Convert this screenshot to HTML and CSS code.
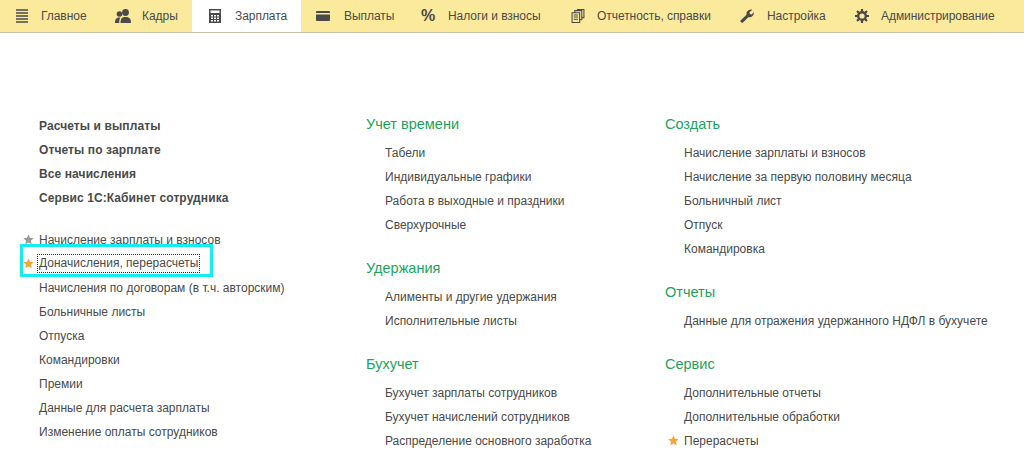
FILE: index.html
```
<!DOCTYPE html>
<html lang="ru">
<head>
<meta charset="utf-8">
<title>Зарплата</title>
<link rel="stylesheet" href="styles.css">
</head>
<body>
<nav class="tabs">
  <a class="tab"><svg class="ico" viewBox="0 0 14 14"><path d="M1 1h12M1 4h12M1 7h12M1 10h12M1 13h12" stroke="#4a4a4a" stroke-width="1.700"/></svg><span>Главное</span></a>
  <a class="tab"><svg class="ico ico-wide" viewBox="0 0 16 14"><circle cx="10.500" cy="3.500" r="3.400" fill="#4a4a4a"/><path d="M5.500 14c0-4.500 1.500-6 5-6s5.500 1.500 5.500 6z" fill="#4a4a4a"/><circle cx="4.500" cy="5" r="2.800" fill="#4a4a4a"/><path d="M0 14c0-4 1.500-5.500 4.500-5.500.5 0 1 .1 1 .1-.8 1-1.300 2.700-1.300 5.400z" fill="#4a4a4a"/></svg><span>Кадры</span></a>
  <a class="tab tab-on"><svg class="ico" viewBox="0 0 12 14" preserveAspectRatio="xMinYMid"><path fill="#4a4a4a" fill-rule="evenodd" d="M0 0h12v14H0zM1.500 1.500v2.500h9V1.500zM2 6v1.500h2V6zM5 6v1.500h2V6zM8 6v1.500h2V6zM2 8.500V10h2V8.500zM5 8.500V10h2V8.500zM8 8.500V10h2V8.500zM2 11v1.500h2V11zM5 11v1.500h2V11zM8 11v1.500h2V11z"/></svg><span>Зарплата</span></a>
  <a class="tab"><svg class="ico ico-far" viewBox="0 0 14 10"><path fill="#4a4a4a" d="M1 0h12a1 1 0 0 1 1 1v1H0V1a1 1 0 0 1 1-1zM0 3.500h14V9a1 1 0 0 1-1 1H1a1 1 0 0 1-1-1z"/></svg><span>Выплаты</span></a>
  <a class="tab"><span class="pct">%</span><span>Налоги и взносы</span></a>
  <a class="tab"><svg class="ico" viewBox="0 0 12 13"><path fill="none" stroke="#4a4a4a" d="M.5 3.500h7v9h-7zM2 5.500h4M2 7.500h4M2 9.500h4M3 3V1.500h6.500V10H8M5.500 1V.5h6V8H10"/></svg><span>Отчетность, справки</span></a>
  <a class="tab"><svg class="ico ico-mid" viewBox="0 0 14 14"><path fill="#4a4a4a" d="M.5 11.500 6.500 5.800C6 3.500 7.500.5 11 .5c.6 0 1 .1 1.300.2L9.500 3.300l.4 1.800 1.800.5 2.100-2.500c.4 3.400-2.400 5.700-5.500 5.200L3 13.500c-1 .8-3.200-.8-2.500-2z"/></svg><span>Настройка</span></a>
  <a class="tab"><svg class="ico" viewBox="0 0 14 14"><circle cx="7" cy="7" r="3.800" fill="none" stroke="#4a4a4a" stroke-width="2.400"/><path stroke="#4a4a4a" stroke-width="2.200" d="M7 0v3M7 11v3M0 7h3M11 7h3M2 2l2 2M10 10l2 2M12 2l-2 2M4 10l-2 2"/></svg><span>Администрирование</span></a>
</nav>
<main class="columns">
  <section class="col col-a">
    <ul class="list strong">
      <li>Расчеты и выплаты</li>
      <li>Отчеты по зарплате</li>
      <li>Все начисления</li>
      <li>Сервис 1С:Кабинет сотрудника</li>
    </ul>
    <ul class="list second">
      <li><svg class="star grey" viewBox="0 0 24 24"><path d="M12 1l3.300 7.400 8 .9-6 5.400 1.700 7.900L12 18.600l-7 4 1.700-7.900-6-5.400 8-.9z"/></svg>Начисление зарплаты и взносов</li>
      <li><svg class="star" viewBox="0 0 24 24"><path d="M12 1l3.300 7.400 8 .9-6 5.400 1.700 7.900L12 18.600l-7 4 1.700-7.900-6-5.400 8-.9z"/></svg><span class="dotted">Доначисления, перерасчеты</span><span class="callout"></span></li>
      <li>Начисления по договорам (в т.ч. авторским)</li>
      <li>Больничные листы</li>
      <li>Отпуска</li>
      <li>Командировки</li>
      <li>Премии</li>
      <li>Данные для расчета зарплаты</li>
      <li>Изменение оплаты сотрудников</li>
    </ul>
  </section>
  <section class="col col-b">
    <h2>Учет времени</h2>
    <ul class="list">
      <li>Табели</li>
      <li>Индивидуальные графики</li>
      <li>Работа в выходные и праздники</li>
      <li>Сверхурочные</li>
    </ul>
    <h2>Удержания</h2>
    <ul class="list">
      <li>Алименты и другие удержания</li>
      <li>Исполнительные листы</li>
    </ul>
    <h2 class="last-head">Бухучет</h2>
    <ul class="list">
      <li>Бухучет зарплаты сотрудников</li>
      <li>Бухучет начислений сотрудников</li>
      <li>Распределение основного заработка</li>
    </ul>
  </section>
  <section class="col col-c">
    <h2>Создать</h2>
    <ul class="list">
      <li>Начисление зарплаты и взносов</li>
      <li>Начисление за первую половину месяца</li>
      <li>Больничный лист</li>
      <li>Отпуск</li>
      <li>Командировка</li>
    </ul>
    <h2>Отчеты</h2>
    <ul class="list">
      <li>Данные для отражения удержанного НДФЛ в бухучете</li>
    </ul>
    <h2 class="last-head">Сервис</h2>
    <ul class="list">
      <li>Дополнительные отчеты</li>
      <li>Дополнительные обработки</li>
      <li><svg class="star" viewBox="0 0 24 24"><path d="M12 1l3.300 7.400 8 .9-6 5.400 1.700 7.900L12 18.600l-7 4 1.700-7.900-6-5.400 8-.9z"/></svg>Перерасчеты</li>
    </ul>
  </section>
</main>
</body>
</html>
```
FILE: styles.css
```
html, body {
  margin: 0;
  padding: 0;
  background: #fff;
  height: 451px;
  overflow: hidden;
}
body {
  font-family: "Liberation Sans", Arial, sans-serif;
  font-size: 12px;
  color: #4a4a4a;
}
.tabs {
  display: grid;
  grid-template-columns: 100px 92px 109px 105px 150px 169px 115px 1fr;
  height: 32px;
  background: #fbea9c;
  border-bottom: 1px solid #c9c4ae;
}
.tab {
  display: flex;
  align-items: center;
  padding-left: 15px;
  white-space: nowrap;
  letter-spacing: -.05px;
}
.tab-on {
  background: #fff;
  padding-left: 17px;
}
.ico {
  width: 14px;
  height: 14px;
  margin-right: 12px;
  flex: none;
}
.ico-wide {
  width: 16px;
  margin-right: 11px;
}
.ico-mid { margin-right: 13px; }
.ico-far { margin-right: 14px; }
.pct {
  width: 27px;
  font-size: 16px;
  font-weight: bold;
  flex: none;
}
.columns {
  display: flex;
}
.col-a { width: 366px; padding: 81px 0 0 39px; box-sizing: border-box; }
.col-b { width: 299px; padding-top: 79px; }
.col-c { flex: 1; padding-top: 79px; }
.list {
  list-style: none;
  margin: 0;
  padding: 0;
}
.list li {
  position: relative;
  height: 24px;
  line-height: 24px;
  white-space: nowrap;
}
.strong li { font-weight: bold; letter-spacing: .1px; }
.second { margin-top: 18px; }
h2 {
  margin: 0 0 5px;
  font-size: 14.5px;
  font-weight: normal;
  line-height: 24px;
  color: #1ba35a;
}
.last-head { margin-top: 1px; }
.col-b .list, .col-c .list { padding-left: 19px; margin-bottom: 19px; }
.star {
  position: absolute;
  left: -16px;
  top: 6px;
  width: 11px;
  height: 11px;
  fill: #f6a53a;
}
.star.grey { fill: #9a9a9a; }
.dotted {
  display: inline-block;
  vertical-align: top;
  margin: 3px 0 0 -1px;
  padding: 0 1px;
  line-height: 17px;
  outline: 1px dotted #333;
}
.callout {
  position: absolute;
  left: -19px;
  top: -8px;
  width: 187px;
  height: 27px;
  border: 3px solid #14ecf4;
  pointer-events: none;
}
```
